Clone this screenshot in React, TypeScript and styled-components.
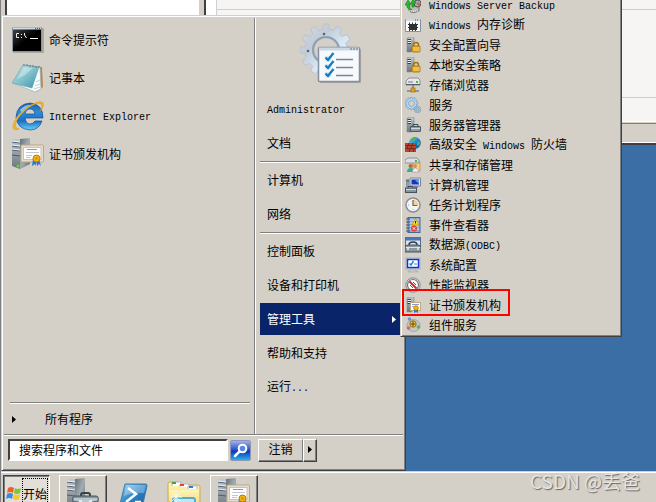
import React from "react";
import styled, { createGlobalStyle, css } from "styled-components";

const face = "#d4d0c8";
const shade = "#808080";
const dark = "#404040";

const GlobalStyle = createGlobalStyle`
  * { box-sizing: border-box; }
  body { margin: 0; overflow: hidden; }
  button, input { font: inherit; color: inherit; }
  svg { display: block; flex: none; }
`;

const Desktop = styled.div`
  position: relative;
  height: 100vh;
  display: flex;
  flex-direction: column;
  overflow: hidden;
  background: #3a6ea5;
  border-left: 1px solid ${shade};
  color: #000;
  font: 12px/16px "Noto Sans CJK SC", sans-serif;
`;

const Latin = styled.span`
  font-family: "Liberation Mono", monospace;
  font-size: 10px;
`;

/* ---------- window behind the menu ---------- */

const BackWindow = styled.div`
  display: flex;
  flex-direction: column;
  background: ${face};
  border-bottom: 2px solid ${dark};
  box-shadow: inset 0 -1px 0 ${shade};
`;
const BackBody = styled.div`
  display: flex;
  height: 122px;
  border-bottom: 1px solid #fff;
`;
const TreePane = styled.div`
  width: 195px;
  margin-left: 4px;
  background: #fff;
  border-left: 2px solid ${dark};
  border-right: 1px solid ${face};
`;
const ContentPane = styled.div`
  flex: 1;
  display: flex;
  margin-left: 4px;
  padding-left: 10px;
  background: #fff;
  border-left: 2px solid ${dark};
`;
const ContentSheet = styled.div`
  flex: 1;
  display: flex;
  flex-direction: column;
  padding-top: 9px;
  background: #f6f5f4;
  border-left: 1px solid #d0d0d0;
`;
const ContentRow = styled.div`
  height: 89px;
  border: 1px solid #cfcdcb;
  border-width: 1px 0;
`;
const StatusBar = styled.div`
  height: 20px;
  margin-top: 1px;
  border-top: 1px solid ${shade};
  border-bottom: 1px solid #fff;
`;

/* ---------- start menu ---------- */

const raised = css`
  border: 1px solid;
  border-color: ${face} ${dark} ${dark} ${face};
  box-shadow: inset 1px 1px 0 #fff, inset -1px -1px 0 ${shade};
  background: ${face};
`;

const StartMenu = styled.nav`
  ${raised}
  position: absolute;
  left: 0;
  bottom: 31px;
  width: 405px;
  padding: 2px;
`;
const Panes = styled.div`
  display: flex;
  border-bottom: 1px solid ${shade};
`;
const ProgramsPane = styled.div`
  flex: 1;
  display: flex;
  flex-direction: column;
  border-right: 1px solid ${shade};
`;
const List = styled.ul`
  list-style: none;
  margin: 0;
  padding: 0;
`;
const PinnedList = styled(List)`
  flex: 1;
  padding: 3px 4px 0 8px;
`;
const MenuButton = styled.button`
  display: flex;
  align-items: center;
  width: 100%;
  border: 0;
  margin: 0;
  text-align: left;
  white-space: nowrap;
  background: transparent;
`;
const PinnedItem = styled(MenuButton)`
  height: 38px;
  padding: 0;
  gap: 5px;
`;
const Rule = styled.hr`
  height: 2px;
  margin: 0;
  border: 0;
  border-top: 1px solid ${shade};
  border-bottom: 1px solid #fff;
`;
const ProgramsRule = styled(Rule)`
  margin: 0 4px 0 6px;
`;
const AllPrograms = styled(MenuButton)`
  height: 30px;
  padding: 0 8px;
  gap: 29px;
`;
const PlacesPane = styled.div`
  width: 148px;
  padding: 3px 3px 29px 4px;
  border-left: 1px solid #fff;
`;
const UserPicture = styled.div`
  display: flex;
  padding-left: 40px;
  height: 72px;
`;
const PlaceEntry = styled.li`
  position: relative;
  margin-bottom: 2px;
`;
const PlaceItem = styled(MenuButton)<{ $active?: boolean }>`
  height: 32px;
  padding: 0 4px 0 7px;
  justify-content: space-between;
  background: ${(p) => (p.$active ? "#0a246a" : "transparent")};
  color: ${(p) => (p.$active ? "#fff" : "#000")};
`;
const PlaceRule = styled(Rule)`
  margin-bottom: 1px;
`;
const Footer = styled.div`
  display: flex;
  align-items: center;
  height: 33px;
  padding: 0 4px 4px;
  border-top: 1px solid #fff;
`;
const SearchBox = styled.input`
  width: 220px;
  height: 22px;
  padding: 0 9px 2px;
  border: 2px solid;
  border-color: ${dark} #fff #fff ${dark};
  border-radius: 0;
  outline: 0;
  background: #fff;
  &::placeholder { color: #000; opacity: 1; }
`;
const SearchButton = styled.button`
  width: 21px;
  height: 21px;
  margin: 0 7px 0 2px;
  padding: 1px;
  border: 1px solid #8d98b8;
  border-radius: 2px;
  background: linear-gradient(#a3b0ee, #2c51d2 45%, #1437bd 55%, #24b4e8);
`;
const PushButton = styled.button<{ $narrow?: boolean }>`
  display: flex;
  align-items: center;
  justify-content: center;
  width: ${(p) => (p.$narrow ? "14px" : "45px")};
  height: 23px;
  padding: 0 0 2px;
  border: 1px solid;
  border-color: #fff ${dark} ${dark} #fff;
  box-shadow: inset -1px -1px 0 ${shade};
  background: ${face};
  ${(p) => !p.$narrow && css`border-right-color: ${shade}; box-shadow: inset 0 -1px 0 ${shade};`}
`;

/* ---------- administrative tools submenu ---------- */

const Submenu = styled(List)`
  ${raised}
  position: absolute;
  left: 100%;
  bottom: -2px;
  z-index: 1;
  width: 222px;
  padding: 1px;
  color: #000;
`;
const ToolEntry = styled.li`
  position: relative;
`;
const ToolItem = styled(MenuButton)`
  height: 20px;
  padding: 0 3px;
  gap: 8px;
`;
const Highlight = styled.span`
  position: absolute;
  top: -6px;
  left: 0;
  width: 108px;
  height: 27px;
  border: 2px solid #f00;
  pointer-events: none;
`;

/* ---------- taskbar ---------- */

const Taskbar = styled.footer`
  display: flex;
  align-items: flex-start;
  gap: 3px;
  height: 31px;
  margin-top: auto;
  padding: 2px 2px 0;
  overflow: hidden;
  background: ${face};
  border-top: 1px solid ${face};
  box-shadow: inset 0 1px 0 #fff;
`;
const StartButton = styled.button`
  display: flex;
  align-items: center;
  width: 47px;
  height: 38px;
  margin: 1px 6px 0 0;
  padding: 0 0 0 2px;
  border: 1px solid;
  border-color: ${dark} #fff #fff ${dark};
  box-shadow: inset 1px 1px 0 ${shade};
  background: #e2dfd9;
`;
const StartLabel = styled.span`
  display: flex;
  align-items: center;
  height: 32px;
  width: 26px;
  white-space: nowrap;
  border: 1px dotted #000;
`;
const TaskButton = styled.button<{ $open?: boolean }>`
  display: flex;
  align-items: flex-start;
  justify-content: center;
  width: ${(p) => (p.$open ? "48px" : "47px")};
  height: 38px;
  margin-top: 1px;
  padding: 2px 0 0;
  border: 1px solid transparent;
  background: transparent;
  ${(p) => p.$open && css`
    border-color: #fff ${dark} ${dark} #fff;
    box-shadow: inset -1px -1px 0 ${shade};
  `}
`;

const Watermark = styled.div`
  position: absolute;
  right: 16px;
  bottom: 7px;
  font: 19px/28px "Noto Sans CJK SC", sans-serif;
  color: #e6e4e0;
  text-shadow: 1px 1px 1px #666;
`;

/* ---------- drawings ---------- */

const GradientSheet = styled.svg`
  position: absolute;
  width: 0;
  height: 0;
`;

const Grad = ({ id, stops, diagonal }: { id: string; stops: string[]; diagonal?: boolean }) => (
  <linearGradient id={id} x1="0" y1="0" x2={diagonal ? "1" : "0"} y2="1">
    {stops.map((c, i) => (
      <stop key={i} offset={i / (stops.length - 1)} stopColor={c} />
    ))}
  </linearGradient>
);

const Gradients = () => (
  <GradientSheet aria-hidden="true">
    <defs>
      <Grad id="bluegear" diagonal stops={["#d3dae3", "#c1ccd8", "#dff0ff", "#a9bdd0"]} />
      <Grad id="pad" diagonal stops={["#c4e6ea", "#80c1cb", "#3c94a8"]} />
      <Grad id="ie" stops={["#1e5aa8", "#2f8bd8", "#1b6fc4", "#67d3fa"]} />
      <Grad id="gold" diagonal stops={["#ffe27a", "#f0b020", "#fbdc5c"]} />
      <Grad id="case" stops={["#c3cacf", "#929ca3", "#69747b"]} />
      <Grad id="side" diagonal stops={["#65717a", "#a3adb2", "#626c72"]} />
      <Grad id="console" diagonal stops={["#4a4a4a", "#000", "#000"]} />
      <Grad id="shell" diagonal stops={["#8fd0f3", "#2b83c6", "#155c9c"]} />
      <Grad id="folder" stops={["#fdf4b8", "#f1cf68"]} />
      <Grad id="globe" diagonal stops={["#9ce4ff", "#1c82dd", "#0c3e9d"]} />
    </defs>
  </GradientSheet>
);

const gear = (cx: number, cy: number, outer: number, inner: number, teeth: number) => {
  const step = (Math.PI * 2) / teeth;
  const pt = (r: number, a: number) => `${(cx + r * Math.cos(a)).toFixed(2)} ${(cy + r * Math.sin(a)).toFixed(2)}`;
  let d = "";
  for (let i = 0; i < teeth; i++) {
    const a = i * step;
    d += `${i ? "L" : "M"}${pt(inner, a - step * 0.32)}L${pt(outer, a - step * 0.2)}L${pt(outer, a + step * 0.2)}L${pt(inner, a + step * 0.32)}`;
  }
  return d + "Z";
};
const ring = (cx: number, cy: number, r: number) => `M${cx - r} ${cy}a${r} ${r} 0 1 0 ${2 * r} 0a${r} ${r} 0 1 0 ${-2 * r} 0Z`;

const Svg = ({ w, h = w, box, children }: { w: number; h?: number; box?: string; children: React.ReactNode }) => (
  <svg width={w} height={h} viewBox={box ?? `0 0 ${w} ${h}`} aria-hidden="true">{children}</svg>
);

const Tower = () => (
  <>
    <path d="M8 1L18 0V26L8 31Z" fill="url(#side)" />
    <path d="M0 1L8 1V31L0 28Z" fill="url(#case)" />
    <path d="M0 4L8 5M0 8L8 9M0 12L8 13M0 17L8 18" stroke="#4f5d68" />
    <path d="M0 3L8 4M0 7L8 8M0 11L8 12" stroke="#edf2f5" />
    <circle cx="6" cy="28" r="1.500" fill="#58e51c" />
  </>
);
const Certificate = () => (
  <>
    <rect x="9" y="7" width="22.5" height="17" rx="1" fill="#e9dcc6" stroke="#b4a993" />
    <rect x="11.500" y="9.500" width="17.500" height="12" fill="#fff" stroke="#c9c2b7" />
    <path d="M15 11.500H25" stroke="#8693cf" />
    <path d="M14 14.500H27M14 17.500H20M14 19.500H19" stroke="#c0c7d7" />
    <path d="M21 21L20 28L23 26L24 28L24 22Z M24 22L25 28L27 26L29 28L27 21Z" fill="#2878d8" />
    <circle cx="24.500" cy="20.500" r="3.500" fill="#f4b514" stroke="#b57a08" />
    <circle cx="24.500" cy="20.500" r="1.300" fill="#d8860b" />
  </>
);
const CertServerIcon = () => (
  <Svg w={32}><Tower /><Certificate /></Svg>
);
const ServerToolsIcon = () => (
  <Svg w={32}>
    <Tower />
    <path d="M14 19V17Q14 15 16 15H21Q23 15 23 17V19" fill="none" stroke="#37434b" strokeWidth="2" />
    <rect x="6" y="18" width="25" height="13" rx="2" fill="#8a99a3" stroke="#47545d" />
    <path d="M6 19H31V23L20 25H16L6 23Z" fill="#b9c5cc" stroke="#5a6871" />
    <rect x="12" y="22" width="3" height="5" fill="#e4e8ea" /><rect x="22" y="22" width="3" height="5" fill="#e4e8ea" />
  </Svg>
);
const ConsoleIcon = () => (
  <Svg w={32}>
    <rect x="1" y="4" width="31" height="25" rx="1" fill="#aaa79f" />
    <rect x="0.500" y="3.500" width="29" height="24" rx="1" fill="url(#console)" stroke="#8795a5" />
    <path d="M1 4.500H29" stroke="#cbd8e8" strokeWidth="2" />
    <path d="M23 4.500H28" stroke="#40526e" strokeDasharray="1 1" />
    <path d="M7 9.500H4.500V13.500H7M9.500 10V11M9.500 13V14M12.500 9V11L14.500 14" fill="none" stroke="#eee" />
    <path d="M18 14.500H26" stroke="#fff" />
  </Svg>
);
const NotepadIcon = () => (
  <Svg w={32}>
    <path d="M13 3L30 5L31 25L24 30Z" fill="#b58a45" />
    <path d="M12 4L28 5L29 27L23 30L1 21Z" fill="#f6fbfc" stroke="#99aeb4" strokeWidth=".7" />
    <path d="M11 3L27 5L20 26L0 21Z" fill="url(#pad)" stroke="#5c9ba8" strokeWidth=".5" />
    <path d="M12 5L21 6L13 13L5 17Z" fill="#fff" opacity=".35" />
    <path d="M12 2V4M15 2V4M18 3V5M21 3V5M24 4V6M27 4V6" stroke="#68777d" />
    <path d="M22 27L28 25M23 24L28 22M24 20L28 18" stroke="#c0d2d8" />
  </Svg>
);
const ExplorerIcon = () => (
  <Svg w={32}>
    <path fillRule="evenodd" d="M31 18H13Q14 24 18 24Q21 24 23 21H30Q27 30 18 30Q5 29 4 17Q5 4 18 3Q31 4 31 18ZM13 14H23Q22 9 18 9Q14 9 13 14Z" fill="url(#ie)" stroke="#155397" strokeWidth=".7" />
    <path d="M8 10Q13 4 21 5Q15 6 10 13Z" fill="#d9f1ff" opacity=".6" />
    <path d="M7 29C-3 33 0 19 12 10C23 1 33 -1 31 6C30 9 30 9 28 11C32 4 29 1 21 5C9 11 1 24 4 27Q5 29 7 29Z" fill="url(#gold)" stroke="#d39318" strokeWidth=".5" />
  </Svg>
);
const UserIcon = () => (
  <Svg w={62} h={64}>
    <path fillRule="evenodd" d={gear(26, 29, 26, 21, 12) + ring(26, 29, 12)} fill="url(#bluegear)" stroke="#b4c0cd" strokeWidth=".8" strokeLinejoin="round" />
    <circle cx="26" cy="29" r="13" fill="none" stroke="#929eab" strokeWidth="2" />
    <circle cx="24" cy="13" r="1.300" fill="#51647a" /><circle cx="8" cy="30" r="1.300" fill="#51647a" />
    <rect x="20" y="28" width="41" height="34" rx="1" fill="#a8a49c" />
    <rect x="18.500" y="26.500" width="41" height="34" rx="1" fill="#f7fafc" stroke="#8290a0" strokeWidth="1.500" />
    <path d="M19 28H59" stroke="#cbd7e2" strokeWidth="3" />
    <path d="M50 28H58" stroke="#637283" strokeDasharray="2 1" />
    {[0, 8, 16].map((y) => (
      <g key={y}>
        <rect x="25" y={35 + y} width="6" height="5" fill="#dce6f0" />
        <path d={`M25.500 ${36.500 + y}L28 ${39 + y}L33.500 ${32 + y}`} stroke="#137dc2" strokeWidth="2.300" fill="none" />
        <path d={`M36 ${38.500 + y}H53`} stroke="#857d9b" strokeWidth="1.500" />
      </g>
    ))}
  </Svg>
);
const Arrow = () => (
  <Svg w={4} h={7}><path d="M0 0L4 3.500L0 7Z" fill="currentColor" /></Svg>
);
const MagnifierIcon = () => (
  <Svg w={17}>
    <path d="M8 9L3 14" stroke="#fff" strokeWidth="2.500" strokeLinecap="round" />
    <circle cx="10.500" cy="6.500" r="3.800" fill="#5b86e5" stroke="#fff" strokeWidth="2" />
  </Svg>
);
const WindowsIcon = () => (
  <Svg w={16}>
    <path d="M2 2Q5 0 8 2L7 7Q4 5 1 7Z" fill="#ed6125" />
    <path d="M9 2Q12 4 15 2L14 7Q11 9 8 7Z" fill="#7cc638" />
    <path d="M1 8Q4 6 7 8L6 13Q3 11 0 13Z" fill="#3b8bdc" />
    <path d="M8 8Q11 10 14 8L13 13Q10 15 7 13Z" fill="#fbc52c" />
  </Svg>
);
const ShellIcon = () => (
  <Svg w={32}>
    <path d="M7 6H28Q29 6 29 8L24 30H1Z" fill="url(#shell)" stroke="#3b7cae" />
    <path d="M8 7H28L26 15Q17 14 6 18Z" fill="#fff" opacity=".3" />
    <path d="M10 10L18 16L8 24M17 24H23" fill="none" stroke="#fff" strokeWidth="2.500" />
  </Svg>
);
const FolderIcon = () => (
  <Svg w={34} h={32}>
    <path d="M1 6Q1 4 3 4H11L13 7H31Q33 7 33 9V32H1Z" fill="url(#folder)" stroke="#c9a94d" />
    <path d="M5 8V4H14V8" fill="#fff" stroke="#b0b5b0" />
    <rect x="5" y="4" width="4" height="2" fill="#34ad45" />
    <path d="M13 9V6H22V9M21 11V8H30V11" fill="#fff" stroke="#b8b8b0" />
    <rect x="13" y="6" width="4" height="2" fill="#df4638" /><rect x="22" y="8" width="4" height="2" fill="#297edb" />
    <path d="M2 12H32V32H2Z" fill="url(#folder)" />
    <path d="M6 32V22Q6 20 8 20H26Q28 20 28 22V32" fill="#b8e9f6" stroke="#4fafd2" strokeWidth="2" />
    <path d="M9 13V25M3 19H15M5 15L13 23M13 15L5 23" stroke="#fff" strokeWidth=".8" />
  </Svg>
);

const MiniTower = () => (
  <>
    <path d="M2 1L5 0H9V13L6 15H2Z" fill="url(#case)" stroke="#7c8890" strokeWidth=".6" />
    <path d="M2.500 2.500H6M2.500 4.500H6M2.500 6.500H6" stroke="#34424d" />
    <path d="M3 3.500H6M3 5.500H6" stroke="#eef3f6" />
  </>
);
const MiniDrive = () => (
  <>
    <path d="M2 3L4 1H13L15 3V8H1V4Z" fill="#e7e8eb" stroke="#777b84" strokeWidth=".8" />
    <path d="M1 7.500H15" stroke="#595c66" /><path d="M3 5H8" stroke="#a9adba" strokeWidth="2" />
    <rect x="11" y="4" width="2" height="2" fill="#37c536" />
  </>
);
const MiniCase = () => (
  <>
    <path d="M8 9V7.500H13V9" stroke="#3c4850" fill="none" />
    <rect x="5.500" y="9.500" width="10" height="5" rx=".5" fill="#8c9ba5" stroke="#4b5963" />
    <path d="M6 11.500H15" stroke="#d2d9de" />
  </>
);

const toolIcons: Record<string, React.ReactNode> = {
  backup: (
    <>
      <path d="M4 8L9 6L14 7V14L8 16L4 14Z" fill="#b8babc" stroke="#555" strokeWidth=".7" />
      <circle cx="12.500" cy="6.500" r="3.500" fill="#aaa8ac" stroke="#504c50" /><path d="M12 6L15 8" stroke="#e2552c" strokeWidth="2" />
      <path d="M0 8L3 3L6 7H4Q4 11 7 13Q1 12 2 8ZM6 6L8 2L11 6H9V10H7V6Z" fill="#26bc2c" stroke="#138018" strokeWidth=".6" />
      <path d="M4 14H13" stroke="#f4f4f4" strokeDasharray="1 1" />
    </>
  ),
  memory: (
    <>
      <path d="M.5 2.500H15.500V14.500H.5Z" fill="#fafafa" stroke="#8291a6" /><path d="M1 3H15" stroke="#cfdae8" strokeWidth="2" />
      <path d="M10 3H14" stroke="#47546a" strokeDasharray="1 1" />
      <rect x="4" y="7" width="8" height="6" fill="#303232" />
      <path d="M4.500 5.500V14M7.500 5.500V14M10.500 5.500V14M3 7.500H13M3 10.500H13" stroke="#303232" />
    </>
  ),
  lock: (
    <>
      <MiniTower />
      <path d="M8.500 10V8Q8.500 5.500 11 5.500T13.500 8V10" fill="none" stroke="#a27313" strokeWidth="1.500" />
      <rect x="7" y="9" width="8" height="6" rx="1" fill="#e9ae26" stroke="#986a0c" strokeWidth=".8" />
      <path d="M8 11H15M8 13H15" stroke="#ffda70" strokeWidth=".7" />
    </>
  ),
  storage: (
    <>
      <MiniDrive />
      <path d="M8 8V12M2 14H14" stroke="#77818c" strokeWidth="1.500" /><rect x="6" y="11" width="4" height="4" fill="#e2a21b" stroke="#9b7014" strokeWidth=".7" />
    </>
  ),
  services: (
    <>
      <path fillRule="evenodd" d={gear(6.5, 6.5, 6.5, 5, 12) + ring(6.5, 6.5, 3)} fill="#b6d7ef" stroke="#739fbf" strokeWidth=".7" />
      <path fillRule="evenodd" d={gear(12.5, 12.5, 3.5, 2.5, 8) + ring(12.5, 12.5, 1)} fill="#a6c4d9" stroke="#7195b0" strokeWidth=".6" />
    </>
  ),
  manager: <><MiniTower /><MiniCase /></>,
  firewall: (
    <>
      <circle cx="10" cy="6" r="5.500" fill="url(#globe)" stroke="#2860a8" strokeWidth=".6" />
      <path d="M6 3Q8 0 11 1L9 4L6 5ZM13 4L15 5Q15 8 13 9L12 7Z" fill="#49bd45" />
      <path d="M0 6H9L11 8V15H0Z" fill="#b8432b" />
      <path d="M0 8.500H11M0 11.500H11M3.500 6V9M7.500 6V9M2.500 9V12M6.500 9V12M4.500 12V15M8.500 12V15" stroke="#6f2519" strokeWidth=".8" />
    </>
  ),
  share: (
    <>
      <path d="M8 5H15V14H7Z" fill="#f6d47a" stroke="#b98e2e" strokeWidth=".7" /><path d="M0 3L3 1H12L14 3V6H0Z" fill="#dcdee2" stroke="#7c8188" strokeWidth=".8" />
      <rect x="10" y="3" width="2" height="2" fill="#44bb44" />
      <circle cx="5.500" cy="9" r="2" fill="#b56b36" /><circle cx="10" cy="9" r="2" fill="#d2935a" />
      <path d="M2 15Q2 11 5.500 11T9 15Z" fill="#33ad8c" /><path d="M7 15Q8 11 10.500 11T14 15Z" fill="#e9f1f4" stroke="#739" strokeWidth=".3" />
    </>
  ),
  computer: (
    <>
      <path d="M5 1H15.500V9H5Z" fill="#dce4ed" stroke="#7b8794" /><path d="M6.500 2.500H14V7.500H6.500Z" fill="#1933bb" /><path d="M10 3H14V7Z" fill="#6a98f0" />
      <rect x="1" y="2" width="3.500" height="8" fill="#8d9ca9" /><path d="M1 4H4M9 10H13" stroke="#455967" />
      <path d="M3 11V9.500H8V11" fill="none" stroke="#3c4850" /><rect x=".5" y="11" width="11" height="4.500" fill="#8494a0" stroke="#44535e" /><path d="M1 12.500H11" stroke="#d5dde1" />
    </>
  ),
  clock: (
    <>
      <circle cx="8" cy="8" r="7" fill="#f2f4f5" stroke="#888e94" strokeWidth="1.500" />
      <path d="M8 8V2.500A5.500 5.500 0 0 1 13.500 8Z" fill="#f6d58b" /><path d="M8 3V8.500H12" fill="none" stroke="#5f6670" strokeWidth="1.200" />
      <path d="M3 8H4M8 12V13M12 8H13" stroke="#a1a5aa" />
    </>
  ),
  events: (
    <>
      <rect x="3" y=".5" width="12" height="15" fill="#8aacda" stroke="#4a6693" /><path d="M5 3H14M5 6H14M5 9H14M5 12H14" stroke="#d7e7f8" />
      <path d="M1 2H5M1 5H5M1 8H5M1 11H5M1 14H5" stroke="#495264" />
      <path d="M10.500 1.500L14 8H7Z" fill="#ffe129" stroke="#ab8a04" strokeWidth=".7" /><path d="M10.500 4V6.500" stroke="#222" />
      <circle cx="9" cy="11.500" r="3" fill="#e14433" /><path d="M7.800 10.300L10.200 12.700M10.200 10.300L7.800 12.700" stroke="#fff" />
    </>
  ),
  odbc: (
    <>
      <rect x=".5" y=".5" width="15" height="13" fill="#dce2e8" stroke="#536e99" /><path d="M1 2H15" stroke="#4b76b9" strokeWidth="3" />
      <path d="M4 8Q4 5 8 5T12 8" stroke="#333d44" fill="none" strokeWidth="1.500" /><path d="M0 9L3 8H13L16 9V15H0Z" fill="#8b98a0" stroke="#44515a" />
      <path d="M1 10.500H15" stroke="#d9e0e4" /><path d="M3 10V13M13 10V13" stroke="#eef0f1" strokeWidth="1.500" />
    </>
  ),
  config: (
    <>
      <rect x="1" y="1" width="14" height="11" fill="#d8dee7" stroke="#aab2bd" /><rect x="2.500" y="2.500" width="11" height="8" fill="#fff" stroke="#1431cf" strokeWidth="1.500" />
      <path d="M4.500 6.500L6 8L8.500 4" fill="none" stroke="#158fd0" strokeWidth="1.500" /><path d="M9 7H12" stroke="#6475c0" />
      <path d="M6 12H10L11 14H13V15H3V14H5Z" fill="#c5cbd0" stroke="#9aa0a6" strokeWidth=".5" />
    </>
  ),
  perf: (
    <>
      <circle cx="8" cy="8" r="7.200" fill="#ddd" stroke="#858a8c" /><circle cx="8" cy="8" r="5.500" fill="#fff" stroke="#70777a" strokeWidth="1.200" />
      <path d="M4.500 4.500L11.500 11.500" stroke="#d02424" strokeWidth="2" /><path d="M5 8L8 11M8 5L11 8" stroke="#d02424" />
    </>
  ),
  cert: (
    <>
      <MiniTower />
      <rect x="5.500" y="5.500" width="10" height="8" fill="#fff" stroke="#bfa983" />
      <path d="M7 7.500H14" stroke="#8b9ad0" /><path d="M7 9.500H9" stroke="#b9c0cc" />
      <path d="M9 12V16L11 15L13 16V12Z" fill="#2878d8" />
      <circle cx="11" cy="11" r="2.300" fill="#f4b514" stroke="#b57a08" strokeWidth=".8" />
    </>
  ),
  component: (
    <>
      <ellipse cx="8.500" cy="8.500" rx="6.500" ry="6" fill="#c5c8cb" stroke="#a1a5aa" />
      <circle cx="8" cy="7" r="3.200" fill="#edc637" stroke="#956f17" /><path d="M8 4.500V9.500M5.500 7H10.500" stroke="#67480a" />
      <circle cx="4.500" cy="2" r="1.800" fill="#7b8bdb" /><circle cx="3.500" cy="11" r="1.800" fill="#d9606c" /><circle cx="13.500" cy="10" r="1.800" fill="#58b354" />
    </>
  ),
};

/* ---------- content ---------- */

const Label = ({ children }: { children: string }) => (
  <span>
    {children.split(/([ -~]+)/).map((part, i) => (i % 2 ? <Latin key={i}>{part}</Latin> : part))}
  </span>
);

const pinned: [string, React.ReactNode][] = [
  ["命令提示符", <ConsoleIcon />],
  ["记事本", <NotepadIcon />],
  ["Internet Explorer", <ExplorerIcon />],
  ["证书颁发机构", <CertServerIcon />],
];

const tools: [string, string][] = [
  ["Windows Server Backup", "backup"],
  ["Windows 内存诊断", "memory"],
  ["安全配置向导", "lock"],
  ["本地安全策略", "lock"],
  ["存储浏览器", "storage"],
  ["服务", "services"],
  ["服务器管理器", "manager"],
  ["高级安全 Windows 防火墙", "firewall"],
  ["共享和存储管理", "share"],
  ["计算机管理", "computer"],
  ["任务计划程序", "clock"],
  ["事件查看器", "events"],
  ["数据源(ODBC)", "odbc"],
  ["系统配置", "config"],
  ["性能监视器", "perf"],
  ["证书颁发机构", "cert"],
  ["组件服务", "component"],
];

const Place = ({ label }: { label: string }) => (
  <PlaceEntry><PlaceItem type="button"><Label>{label}</Label></PlaceItem></PlaceEntry>
);

export default function App() {
  return (
    <Desktop>
      <GlobalStyle />
      <Gradients />
      <BackWindow>
        <BackBody>
          <TreePane />
          <ContentPane>
            <ContentSheet><ContentRow /></ContentSheet>
          </ContentPane>
        </BackBody>
        <StatusBar />
      </BackWindow>

      <StartMenu aria-label="开始">
        <Panes>
          <ProgramsPane>
            <PinnedList>
              {pinned.map(([name, icon]) => (
                <li key={name}>
                  <PinnedItem type="button">{icon}<Label>{name}</Label></PinnedItem>
                </li>
              ))}
            </PinnedList>
            <ProgramsRule />
            <AllPrograms type="button"><Arrow />所有程序</AllPrograms>
          </ProgramsPane>
          <PlacesPane>
            <UserPicture><UserIcon /></UserPicture>
            <List><Place label="Administrator" /><Place label="文档" /></List>
            <PlaceRule />
            <List><Place label="计算机" /><Place label="网络" /></List>
            <PlaceRule />
            <List>
              <Place label="控制面板" />
              <Place label="设备和打印机" />
              <PlaceEntry>
                <PlaceItem type="button" $active aria-haspopup="true" aria-expanded="true">
                  管理工具<Arrow />
                </PlaceItem>
                <Submenu>
                  {tools.map(([name, icon]) => (
                    <ToolEntry key={name}>
                      <ToolItem type="button">
                        <Svg w={16}>{toolIcons[icon]}</Svg>
                        <Label>{name}</Label>
                      </ToolItem>
                      {icon === "cert" && <Highlight />}
                    </ToolEntry>
                  ))}
                </Submenu>
              </PlaceEntry>
              <Place label="帮助和支持" />
              <Place label="运行..." />
            </List>
          </PlacesPane>
        </Panes>
        <Footer>
          <SearchBox type="text" aria-label="搜索程序和文件" placeholder="搜索程序和文件" />
          <SearchButton type="button" aria-label="搜索"><MagnifierIcon /></SearchButton>
          <PushButton type="button">注销</PushButton>
          <PushButton type="button" $narrow aria-label="更多选项"><Arrow /></PushButton>
        </Footer>
      </StartMenu>

      <Taskbar>
        <StartButton type="button"><WindowsIcon /><StartLabel>开始</StartLabel></StartButton>
        <TaskButton type="button" $open aria-label="服务器管理器"><ServerToolsIcon /></TaskButton>
        <TaskButton type="button" aria-label="PowerShell"><ShellIcon /></TaskButton>
        <TaskButton type="button" aria-label="文件夹"><FolderIcon /></TaskButton>
        <TaskButton type="button" $open aria-label="证书颁发机构"><CertServerIcon /></TaskButton>
      </Taskbar>
      <Watermark>CSDN @丢爸</Watermark>
    </Desktop>
  );
}
